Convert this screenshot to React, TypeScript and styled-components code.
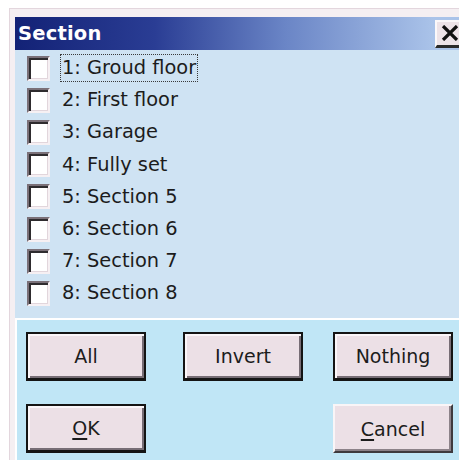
import styled, { createGlobalStyle } from "styled-components";

const GlobalStyle = createGlobalStyle`
   html, body {
      margin: 0;
      padding: 0;
      background: #ffffff;
      overflow: hidden;
   }
   * {
      box-sizing: border-box;
   }
`;

const Screen = styled.div`
   width: 100vw;
   height: 460px;
   overflow: hidden;
   padding: 9px 0 0 10px;
   background: #ffffff;
   font-family: "DejaVu Sans", Verdana, sans-serif;
`;

const Janela = styled.div`
   width: 470px;
   height: 460px;
   border-top: 8px solid #f5eff2;
   border-left: 5px solid #f5eff2;
   box-shadow: -1px -1px 0 #e3d6dd;
   display: flex;
   flex-direction: column;
`;

const BarraTitulo = styled.div`
   height: 33px;
   flex-shrink: 0;
   display: flex;
   align-items: center;
   justify-content: space-between;
   padding-left: 3px;
   background: linear-gradient(90deg, #132276 0%, #2a3d94 30%, #6a85c6 58%, #aac3e9 90%);
`;

const Titulo = styled.span`
   color: #ffffff;
   font-weight: bold;
   font-size: 19.5px;
   letter-spacing: 0.2px;
`;

const BotaoFechar = styled.button`
   width: 32px;
   height: 28px;
   margin-right: 13px;
   padding: 0 3px 0 0;
   display: flex;
   align-items: center;
   justify-content: center;
   background: #ede3e8;
   border: none;
   border-top: 2px solid #fbf8fa;
   border-left: 2px solid #fbf8fa;
   border-bottom: 3px solid #2a2a2a;
   border-right: 2px solid #5a5258;
`;

const PainelLista = styled.div`
   height: 268px;
   flex-shrink: 0;
   padding: 2px 0 0 12px;
   background: #cfe3f3;
`;

const Linha = styled.div`
   height: 32.2px;
   display: flex;
   align-items: center;
   gap: 10px;
`;

const Caixa = styled.span`
   width: 23px;
   height: 25px;
   flex-shrink: 0;
   background: #ffffff;
   border: 2px solid;
   border-color: #7a7078 #f6f0f3 #f6f0f3 #7a7078;
   box-shadow: inset 2px 2px 0 #2e2b2e, inset -1px -1px 0 #e2d6dc;
`;

const Rotulo = styled.span<{ $foco?: boolean }>`
   padding: 1px 1px 2px 1px;
   font-size: 19.4px;
   color: #1c1c1c;
   border: 1.5px dotted ${({ $foco }) => ($foco ? "#3a3a3a" : "transparent")};
`;

const PainelBotoes = styled.div`
   flex: 1;
   padding: 12px 0 0 9px;
   background: #c0e6f6;
   border-top: 2px solid #ffffff;
   border-left: 2px solid #ffffff;
   display: grid;
   grid-template-columns: 157px 150px 120px;
   grid-auto-rows: 49px;
   row-gap: 23px;
   align-content: start;
`;

const Botao = styled.button<{ $padrao?: boolean; $coluna: number }>`
   grid-column: ${({ $coluna }) => $coluna};
   width: 120px;
   height: 49px;
   padding: 0;
   font-family: "DejaVu Sans", Verdana, sans-serif;
   font-size: 19px;
   color: #1c1c1c;
   background: #ece0e6;
   ${({ $padrao }) =>
      $padrao
         ? `
   border: 2px solid #141414;
   border-bottom-width: 3px;
   box-shadow: inset 2px 2px 0 #fbf6f9, inset -2px -2px 0 #776d75;
   `
         : `
   border: 2px solid;
   border-color: #f9f5f7 #3e3a3e #3e3a3e #f9f5f7;
   box-shadow: inset -2px -2px 0 #8c8289;
   `}

   u {
      text-decoration-thickness: 1.5px;
      text-underline-offset: 3px;
   }
`;

const itens = [
   "1: Groud floor",
   "2: First floor",
   "3: Garage",
   "4: Fully set",
   "5: Section 5",
   "6: Section 6",
   "7: Section 7",
   "8: Section 8",
];

export default function App() {
   return (
      <Screen>
         <GlobalStyle />
         <Janela>
            <BarraTitulo>
               <Titulo>Section</Titulo>
               <BotaoFechar>
                  <svg width="18" height="16" viewBox="0 0 18 16">
                     <path d="M2 1 L16 15 M16 1 L2 15" stroke="#111" strokeWidth="3.2" />
                  </svg>
               </BotaoFechar>
            </BarraTitulo>
            <PainelLista>
               {itens.map((item, i) => (
                  <Linha key={item}>
                     <Caixa />
                     <Rotulo $foco={i === 0}>{item}</Rotulo>
                  </Linha>
               ))}
            </PainelLista>
            <PainelBotoes>
               <Botao $padrao $coluna={1}>All</Botao>
               <Botao $padrao $coluna={2}>Invert</Botao>
               <Botao $padrao $coluna={3}>Nothing</Botao>
               <Botao $padrao $coluna={1}>
                  <u>O</u>K
               </Botao>
               <Botao $coluna={3}>
                  <u>C</u>ancel
               </Botao>
            </PainelBotoes>
         </Janela>
      </Screen>
   );
}
